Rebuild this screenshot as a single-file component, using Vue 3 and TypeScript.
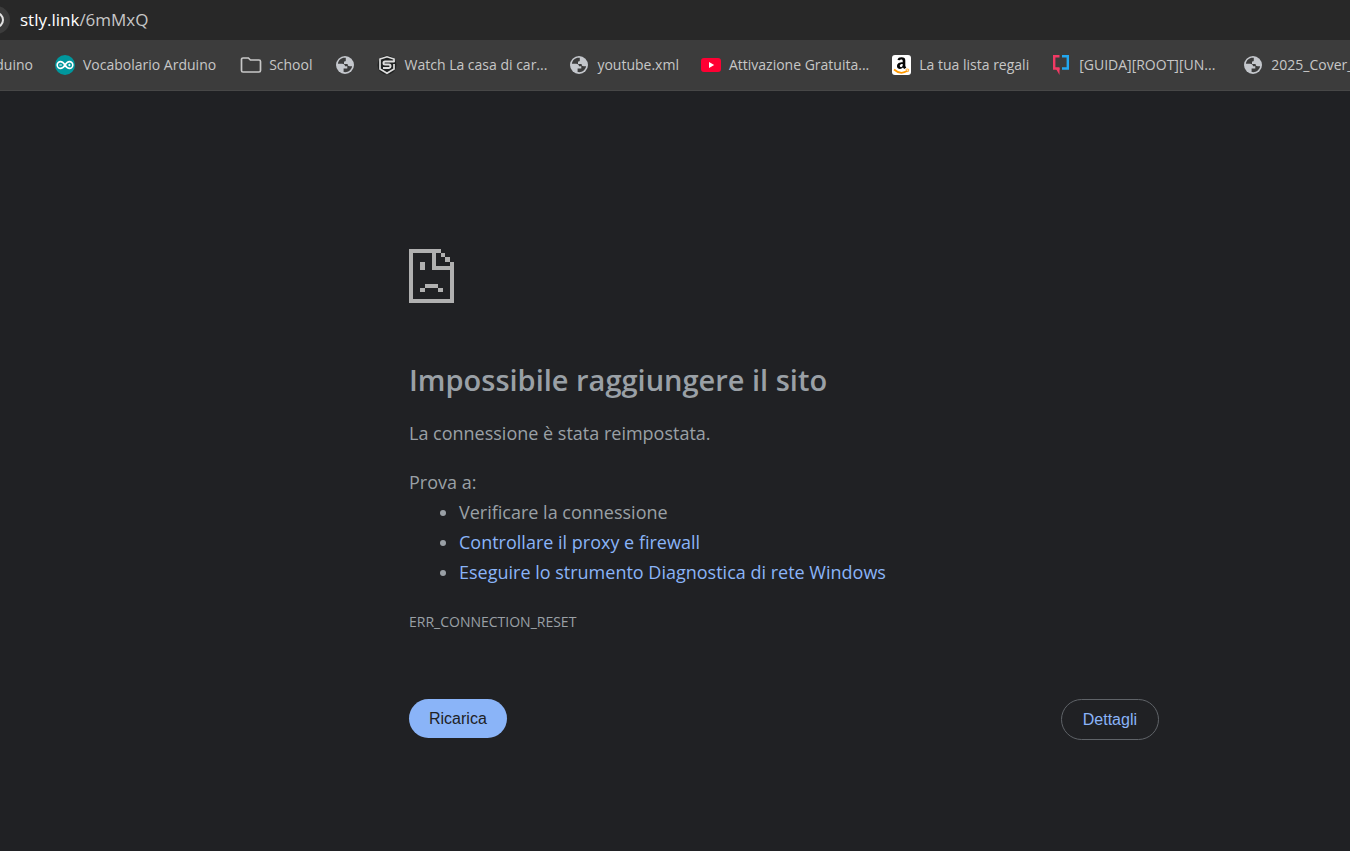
<script setup lang="ts">
type IconName = 'none' | 'arduino' | 'folder' | 'globe' | 'shield' | 'youtube' | 'amazon' | 'brackets'

interface Bookmark {
  id: number
  icon: IconName
  title: string
}

const bookmarks: Bookmark[] = [
  { id: 1, icon: 'none', title: 'duino' },
  { id: 2, icon: 'arduino', title: 'Vocabolario Arduino' },
  { id: 3, icon: 'folder', title: 'School' },
  { id: 4, icon: 'globe', title: '' },
  { id: 5, icon: 'shield', title: 'Watch La casa di car...' },
  { id: 6, icon: 'globe', title: 'youtube.xml' },
  { id: 7, icon: 'youtube', title: 'Attivazione Gratuita...' },
  { id: 8, icon: 'amazon', title: 'La tua lista regali' },
  { id: 9, icon: 'brackets', title: '[GUIDA][ROOT][UN...' },
  { id: 10, icon: 'globe', title: '2025_Cover_' },
]
</script>

<template>
  <div class="window">
    <header class="toolbar">
      <button class="site-info" type="button" aria-label="Informazioni sito">
        <svg viewBox="0 0 28 28" aria-hidden="true">
          <circle cx="14" cy="14" r="7" fill="none" stroke="#e3e3e3" stroke-width="2" />
        </svg>
      </button>
      <div class="url"><span class="host">stly.link</span>/6mMxQ</div>
    </header>

    <nav class="bookmarks" aria-label="Preferiti">
      <a
        v-for="b in bookmarks"
        :key="b.id"
        href="#"
        class="bookmark"
        :class="{ leading: b.icon === 'none', folder: b.icon === 'folder' }"
        :aria-label="b.title || 'Sito'"
      >
        <svg v-if="b.icon === 'arduino'" class="icon" viewBox="0 0 20 20" aria-hidden="true">
          <circle cx="10" cy="10" r="10" fill="#00979d" />
          <path
            d="M10 10C8.500 7.500 7.300 6.600 5.600 6.600a3.400 3.400 0 0 0 0 6.800c1.700 0 2.900-.9 4.400-3.400s2.700-3.400 4.400-3.400a3.400 3.400 0 0 1 0 6.800C12.700 13.400 11.500 12.500 10 10z"
            fill="none"
            stroke="#fff"
            stroke-width="1.600"
          />
          <path d="M4.400 10h2.400M13.200 10h2.400M14.400 8.800v2.400" stroke="#fff" stroke-width="1" />
        </svg>
        <svg v-else-if="b.icon === 'folder'" class="icon" viewBox="0 0 20 20" aria-hidden="true">
          <path
            d="M2 3h5.400l2 2H18a1.500 1.500 0 0 1 1.500 1.500v9A1.500 1.500 0 0 1 18 17H2A1.500 1.500 0 0 1 .5 15.500v-11A1.500 1.500 0 0 1 2 3z"
            fill="none"
            stroke="#c7c7c7"
            stroke-width="1.700"
          />
        </svg>
        <svg v-else-if="b.icon === 'globe'" class="icon" viewBox="0 0 20 20" aria-hidden="true">
          <circle cx="10" cy="10" r="9" fill="#c4c7cc" />
          <path
            d="M10.800 2.800C6.500 2.300 3.300 5 2.900 8.800h4.300c1.700 0 2.800 1 2.800 2.400h2.300v2.200H8.600v3.600c4.200.8 7.900-1.900 8.500-5.700h-2.400c-1.500 0-2.100-1-2.100-2.300H9V6.600c1.200 0 1.800-.4 1.800-1.400z"
            fill="#3c3c3c"
          />
        </svg>
        <svg v-else-if="b.icon === 'shield'" class="icon" viewBox="0 0 20 20" aria-hidden="true">
          <circle cx="10" cy="10" r="9.500" fill="#202222" />
          <path
            d="M17 7V4L10 1.800 3 4v10l7 4.200 7-4.200V9"
            fill="none"
            stroke="#dedede"
            stroke-width="1.700"
          />
          <path
            d="M17.500 6.500H8Q6.500 6.500 6.500 8t1.500 1.500h4Q13.500 9.500 13.500 11.200T12 13H6"
            fill="none"
            stroke="#dedede"
            stroke-width="2"
          />
        </svg>
        <svg v-else-if="b.icon === 'youtube'" class="icon" viewBox="0 0 20 20" aria-hidden="true">
          <rect y="3" width="20" height="14" rx="3" fill="#ff0033" />
          <path d="M8 7l5.200 3L8 13z" fill="#fff" />
        </svg>
        <svg v-else-if="b.icon === 'amazon'" class="icon" viewBox="0 0 20 20" aria-hidden="true">
          <rect x="1" width="19" height="20" rx="3" fill="#fff" />
          <path
            d="M6.500 5C6.800 3 8.300 2.300 10.500 2.300c2.800 0 3.800 1.200 3.800 3.200v4.800c0 1 .4 1.500 1 2.200l-2 1.600c-.7-.5-1-1-1.300-1.500-2 2.300-6 1.700-6-1.400 0-2.900 2.600-3.900 5.700-3.900V6c0-1-.4-1.500-1.300-1.500S9.100 4.900 8.900 5.300z M11.700 8.900c-1.800 0-2.900.5-2.900 1.900 0 1.900 2.900 1.900 2.900-.8z"
            fill="#050505"
            fill-rule="evenodd"
          />
          <path d="M3 14.500c4.300 3.800 9.500 3.900 13.500 1.300" fill="none" stroke="#ff9900" stroke-width="1.700" />
          <path d="M14.700 14.400c1.300-.4 2.600-.4 2.900 0s-.1 1.700-.9 2.700" fill="none" stroke="#ff9900" stroke-width="1" />
        </svg>
        <svg v-else-if="b.icon === 'brackets'" class="icon" viewBox="0 0 20 20" aria-hidden="true">
          <path d="M8.500 1.200H3.200V13.500H8.500" fill="none" stroke="#f13a64" stroke-width="2.400" />
          <path d="M4.500 13h4v7z" fill="#f13a64" />
          <path d="M11 1.200h5.800V13.500H11" fill="none" stroke="#22a7f0" stroke-width="2.400" />
        </svg>
        <span v-if="b.title" class="title">{{ b.title }}</span>
      </a>
    </nav>

    <main class="page">
      <div class="error">
        <svg class="sad-file" viewBox="0 0 45 54" shape-rendering="crispEdges" aria-hidden="true">
          <path
            d="M0 0h32v4H27v13h14v-4h4v41H0zM4 4v46h37V21H23V4zM32 4h4v4h-4zM36 8h5v5h-5zM11 13h5v8h-5zM16 35h13v4H16zM11 39h5v4h-5zM29 39h5v4h-5z"
            fill="#b0b0b0"
            fill-rule="evenodd"
          />
        </svg>
        <h1>Impossibile raggiungere il sito</h1>
        <p class="summary">La connessione è stata reimpostata.</p>
        <div class="suggestions">
          <p>Prova a:</p>
          <ul>
            <li>Verificare la connessione</li>
            <li><a href="#">Controllare il proxy e firewall</a></li>
            <li><a href="#">Eseguire lo strumento Diagnostica di rete Windows</a></li>
          </ul>
        </div>
        <p class="code">ERR_CONNECTION_RESET</p>
        <div class="actions">
          <button class="reload" type="button">Ricarica</button>
          <button class="details" type="button">Dettagli</button>
        </div>
      </div>
    </main>
  </div>
</template>

<style>
body {
  margin: 0;
  background: #202124;
}
</style>

<style scoped>
.window {
  min-height: 100vh;
  overflow: hidden;
  background: #202124;
  font-family: 'Open Sans', 'Noto Sans', sans-serif;
}

.toolbar {
  display: flex;
  align-items: center;
  height: 40px;
  background: #282828;
}

.site-info {
  flex: none;
  width: 28px;
  height: 28px;
  margin-left: -18px;
  padding: 0;
  border: 0;
  border-radius: 50%;
  background: #3c3c3c;
}

.site-info svg {
  display: block;
  width: 28px;
  height: 28px;
}

.url {
  margin-left: 10px;
  font-size: 17px;
  line-height: 24px;
  color: #c7c7c7;
}

.host {
  color: #ffffff;
}

.bookmarks {
  display: flex;
  align-items: center;
  gap: 22px;
  height: 50px;
  border-bottom: 1px solid #474747;
  background: #3c3c3c;
  overflow: hidden;
}

.bookmark {
  display: flex;
  flex: none;
  align-items: center;
  gap: 8px;
  font-size: 14px;
  line-height: 20px;
  color: #c7c7c7;
  text-decoration: none;
  white-space: nowrap;
}

.leading {
  justify-content: flex-end;
  width: 33px;
}

.folder {
  margin-left: 3px;
}

.bookmark:last-child {
  margin-left: 6px;
}

.icon {
  flex: none;
  width: 20px;
  height: 20px;
  overflow: visible;
}

.page {
  padding: 158px 40px 40px 409px;
}

.error {
  max-width: 750px;
  font-size: 18px;
  line-height: 30px;
  color: #9aa0a6;
}

.sad-file {
  display: block;
  width: 45px;
  height: 54px;
}

h1 {
  margin: 59px 0 20px;
  font-size: 29px;
  font-weight: 600;
  line-height: 36px;
}

p {
  margin: 0;
}

.suggestions {
  margin-top: 19px;
}

ul {
  margin: 0;
  padding-left: 50px;
}

a {
  color: #8ab4f8;
  text-decoration: none;
}

.code {
  margin-top: 20px;
  font-size: 14px;
}

.actions {
  display: flex;
  align-items: flex-start;
  justify-content: space-between;
  margin-top: 62px;
}

.actions button {
  border-radius: 21px;
  font-family: 'Liberation Sans', Arial, sans-serif;
  font-size: 16px;
}

.reload {
  height: 39px;
  padding: 0 20px;
  border: 0;
  background: #8ab4f8;
  color: #202124;
}

.details {
  height: 41px;
  padding: 0 21px;
  border: 1px solid #5f6368;
  background: transparent;
  color: #8ab4f8;
}
</style>
